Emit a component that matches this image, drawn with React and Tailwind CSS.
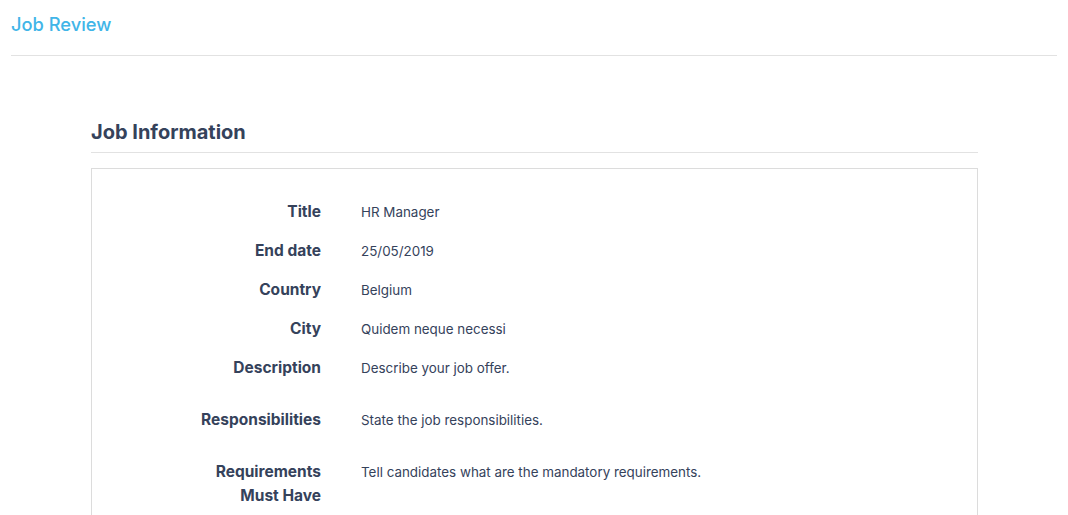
const rows = [
  { label: 'Title', value: 'HR Manager' },
  { label: 'End date', value: '25/05/2019' },
  { label: 'Country', value: 'Belgium' },
  { label: 'City', value: 'Quidem neque necessi' },
  { label: 'Description', value: 'Describe your job offer.', tall: true },
  { label: 'Responsibilities', value: 'State the job responsibilities.', tall: true },
  { label: ['Requirements', 'Must Have'], value: 'Tell candidates what are the mandatory requirements.', tall: true },
];

function Row({ label, value, tall }) {
  return (
    <div className={`flex gap-10 py-[7.5px] ${tall ? 'mb-[13px]' : ''}`}>
      <div className="w-[229px] shrink-0 text-right text-[15.5px] font-bold leading-6 text-[#35425b]">
        {Array.isArray(label) ? label.map((l) => <div key={l}>{l}</div>) : label}
      </div>
      <div className="text-[13.4px] leading-6 text-[#35425b]">{value}</div>
    </div>
  );
}

export default function App() {
  return (
    <div className="min-h-screen bg-white px-[11px] font-['Inter',sans-serif]">
      <div className="flex h-[56px] items-center border-b border-[#e2e2e2] pb-[5px]">
        <h1 className="text-[18.3px] font-medium text-[#41b5e8]">Job Review</h1>
      </div>

      <div className="pl-20 pr-[79px] pt-[62px]">
        <div className="border-b border-[#e2e2e2] pb-[6px]">
          <h2 className="text-[20px] font-bold leading-7 text-[#35425b]">Job Information</h2>
        </div>
        <div className="mt-[15px] border border-[#dcdcdc] pt-[23px] pb-6">
          {rows.map((r, i) => (
            <Row key={i} {...r} />
          ))}
        </div>
      </div>
    </div>
  );
}
